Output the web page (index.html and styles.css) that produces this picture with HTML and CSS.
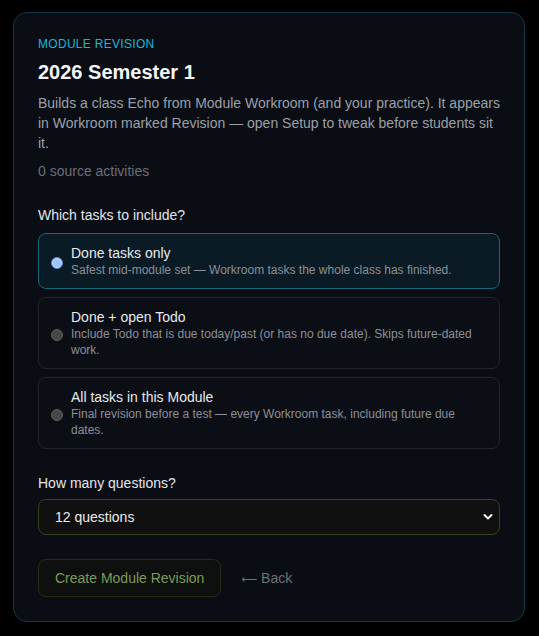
FILE: index.html
```html
<!DOCTYPE html>
<html lang="en">
<head>
<meta charset="utf-8">
<title>Module Revision</title>
<link rel="stylesheet" href="styles.css">
</head>
<body>
<div class="card">
  <div class="eyebrow">MODULE REVISION</div>
  <h1 class="title">2026 Semester 1</h1>
  <p class="desc">Builds a class Echo from Module Workroom (and your practice). It appears in Workroom marked Revision — open Setup to tweak before students sit it.</p>
  <p class="meta">0 source activities</p>

  <div class="label label-first">Which tasks to include?</div>
  <div class="options">
    <label class="option selected">
      <span class="radio"></span>
      <span class="opt-text">
        <span class="opt-title">Done tasks only</span>
        <span class="opt-desc">Safest mid-module set — Workroom tasks the whole class has finished.</span>
      </span>
    </label>
    <label class="option">
      <span class="radio"></span>
      <span class="opt-text">
        <span class="opt-title">Done + open Todo</span>
        <span class="opt-desc">Include Todo that is due today/past (or has no due date). Skips future-dated work.</span>
      </span>
    </label>
    <label class="option">
      <span class="radio"></span>
      <span class="opt-text">
        <span class="opt-title">All tasks in this Module</span>
        <span class="opt-desc">Final revision before a test — every Workroom task, including future due dates.</span>
      </span>
    </label>
  </div>

  <div class="label">How many questions?</div>
  <div class="select">
    <span>12 questions</span>
    <svg class="chev" width="10" height="8" viewBox="0 0 10 8"><path d="M1.5 2 L5 5.5 L8.5 2" fill="none" stroke="#f0f0f0" stroke-width="2" stroke-linecap="round" stroke-linejoin="round"/></svg>
  </div>

  <div class="actions">
    <button class="btn">Create Module Revision</button>
    <span class="back"><span class="arrow">⟵</span> Back</span>
  </div>
</div>
</body>
</html>
```

FILE: styles.css
```css
html, body {
  margin: 0;
  padding: 0;
  background: #000;
}
body {
  padding: 12px 14px 15px 13px;
  font-family: "Liberation Sans", Arial, sans-serif;
}
.card {
  width: 462px;
  border: 1px solid #123a48;
  border-radius: 14px;
  background: #0a0d14;
  padding: 24px;
}
.eyebrow {
  font-size: 12px;
  line-height: 14px;
  letter-spacing: 0.3px;
  color: #1eb4d8;
}
.title {
  margin: 9px 0 0;
  font-size: 20px;
  line-height: 24px;
  font-weight: bold;
  color: #f4f5f7;
}
.desc {
  margin: 9px -6px 0 0;
  font-size: 14px;
  line-height: 20px;
  color: #9ba0a8;
}
.meta {
  margin: 8px 0 0;
  font-size: 14px;
  line-height: 20px;
  color: #6a6f77;
}
.label {
  margin-top: 24px;
  font-size: 14px;
  line-height: 20px;
  color: #e4e6e9;
}
.options {
  margin-top: 8px;
  display: flex;
  flex-direction: column;
  gap: 8px;
}
.option {
  display: flex;
  align-items: center;
  gap: 8px;
  padding: 10px 12px;
  border: 1px solid #22252c;
  border-radius: 8px;
  background: #0b0e15;
}
.option.selected {
  background: #0a1b25;
  border-color: #176579;
}
.radio {
  flex: none;
  width: 10px;
  height: 10px;
  border-radius: 50%;
  background: #474747;
  border: 1.5px solid #5e5e5e;
  margin-top: 3px;
}
.selected .radio {
  background: #9cc4ff;
  border: 1.5px solid #5a86c8;
  box-shadow: 0 0 0 1px #cfe0f7 inset;
}
.opt-text {
  display: flex;
  flex-direction: column;
}
.opt-title {
  font-size: 14px;
  line-height: 18px;
  color: #e8eaed;
}
.opt-desc {
  font-size: 12px;
  line-height: 16px;
  color: #8b9099;
}
.label + .select {
  margin-top: 6px;
}
.select {
  display: flex;
  align-items: center;
  justify-content: space-between;
  height: 34px;
  padding: 0 6px 0 16px;
  border: 1px solid #33451a;
  border-radius: 8px;
  background: #101010;
  font-size: 14px;
  color: #ececec;
}
.chev {
  display: block;
}
.actions {
  margin-top: 24px;
  display: flex;
  align-items: center;
  gap: 20px;
}
.btn {
  height: 38px;
  padding: 0 16px;
  border: 1px solid #232e14;
  border-radius: 8px;
  background: #0d100f;
  font-family: "Liberation Sans", Arial, sans-serif;
  font-size: 14px;
  color: #7f9a58;
}
.back {
  font-size: 14px;
  color: #6d7178;
}
.arrow {
  font-family: "DejaVu Sans", sans-serif;
  font-size: 11px;
}
```
